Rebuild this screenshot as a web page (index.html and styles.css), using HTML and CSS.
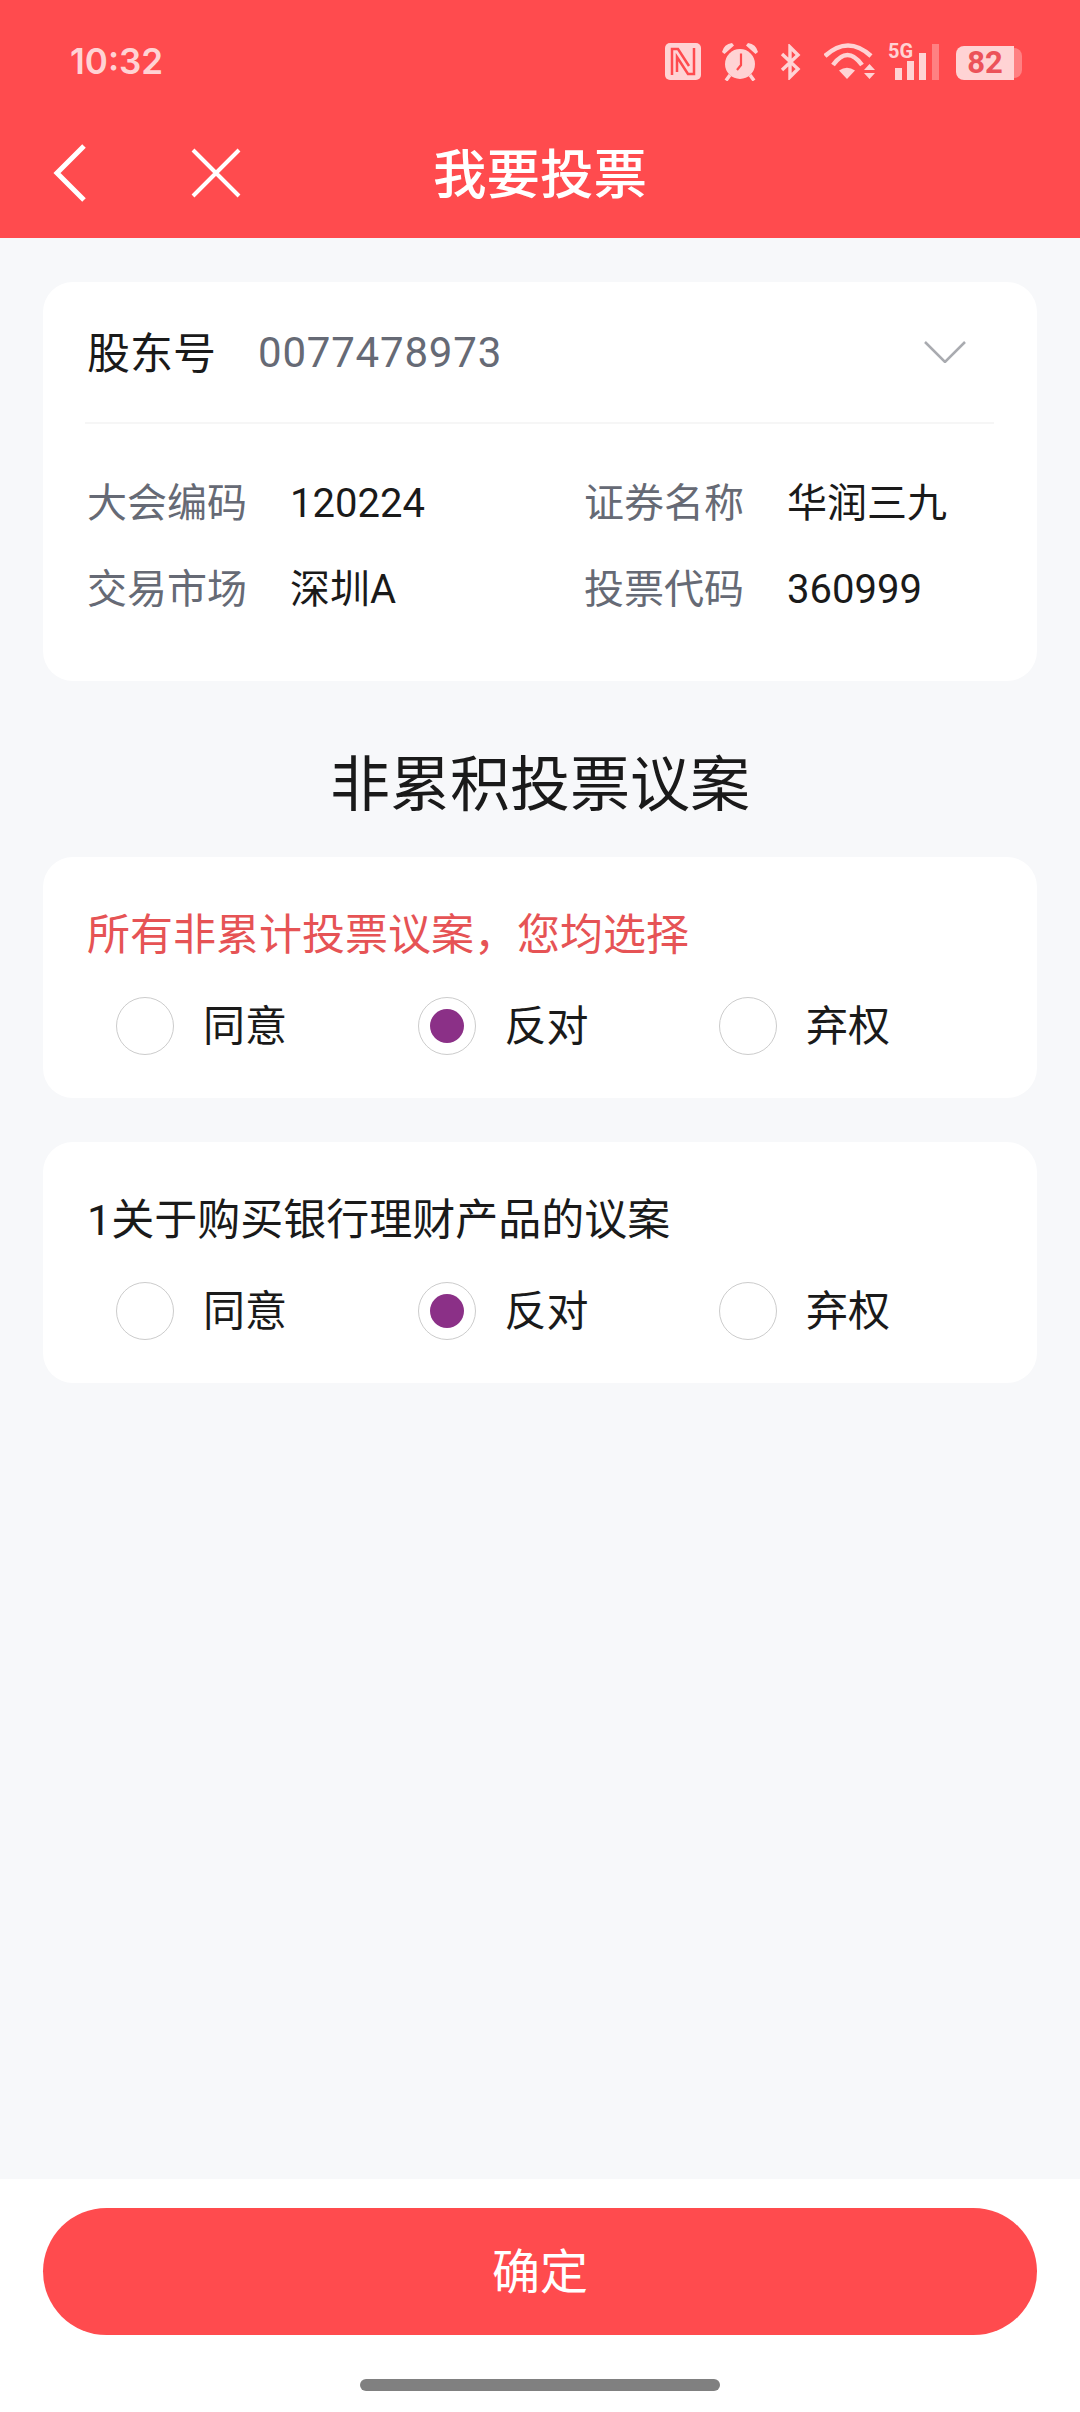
FILE: index.html
```html
<!DOCTYPE html>
<html lang="zh-CN">
  <head>
    <meta charset="UTF-8" />
    <meta name="viewport" content="width=device-width, initial-scale=1.0" />
    <title>我要投票</title>
    <link rel="stylesheet" href="styles.css">
  </head>
  <body>
    <header class="top">
      <div class="status-bar">
        <span class="time">10:32</span>
        <div class="status-icons">
          <svg class="ic-nfc" width="36" height="37" viewBox="0 0 36 37">
            <rect width="36" height="37" rx="5" fill="#ffd3d4"/>
            <path d="M7 32V6h6l11 17" fill="none" stroke="#ff4b4e" stroke-width="2.500"/>
            <path d="M29 5v26h-6L12 14v15" fill="none" stroke="#ff4b4e" stroke-width="2.500"/>
          </svg>
          <svg class="ic-alarm" width="36" height="38" viewBox="0 0 36 38">
            <circle cx="18" cy="21" r="15" fill="#ffd3d4"/>
            <path d="M0 9Q2 1 10 0l2 2.500L2.500 11zM36 9Q34 1 26 0l-2 2.500L33.500 11z" fill="#ffd3d4"/>
            <path d="M8 32 4 37.500M28 32l4 5.500" stroke="#ffd3d4" stroke-width="3.500"/>
            <path d="M19 10.500V22l-4 5" fill="none" stroke="#ff4b4e" stroke-width="2.200"/>
          </svg>
          <svg class="ic-bt" width="21" height="36" viewBox="0 0 21 36">
            <path d="M2 10 18 25 10 33V3l8 8L2 26" fill="none" stroke="#ffd3d4" stroke-width="3.400"/>
          </svg>
          <svg class="ic-wifi" width="52" height="37" viewBox="0 0 52 37">
            <path d="M1 13Q24-8 47 13" fill="none" stroke="#ffd3d4" stroke-width="4.500"/>
            <path d="M9 22Q23.500 2 38 22" fill="none" stroke="#ffd3d4" stroke-width="4.500"/>
            <path d="M15 27.500Q23 22 31 27.500L23 36z" fill="#ffd3d4"/>
            <path d="M40 27h11l-5.500-6zM40 30h11l-5.500 6z" fill="#ffd3d4"/>
          </svg>
          <div class="ic-signal">
            <span class="sig-5g">5G</span>
            <svg width="46" height="37" viewBox="0 0 46 37">
              <rect x="1" y="25" width="7" height="12" fill="#ffd3d4"/>
              <rect x="13" y="18" width="7" height="19" fill="#ffd3d4"/>
              <rect x="25" y="10" width="7" height="27" fill="#ffd3d4"/>
              <rect x="38" y="1" width="7" height="36" fill="#ff8082"/>
            </svg>
          </div>
          <div class="battery">
            <span class="battery-body">82</span>
            <span class="battery-nub"></span>
          </div>
        </div>
      </div>
      <nav class="nav">
        <div class="nav-icons">
          <svg width="36" height="60" viewBox="0 0 36 60">
            <path d="M32 3 5 30l27 27" fill="none" stroke="#fff" stroke-width="5"/>
          </svg>
          <svg width="50" height="50" viewBox="0 0 50 50">
            <path d="M2 2l46 46M48 2 2 48" fill="none" stroke="#fff" stroke-width="4"/>
          </svg>
        </div>
        <h1>我要投票</h1>
      </nav>
    </header>

    <main class="content">
      <section class="card info-card">
        <div class="holder-row">
          <span class="holder-label">股东号</span>
          <span class="holder-value">0077478973</span>
          <svg class="dropdown" width="42" height="22" viewBox="0 0 42 22">
            <path d="M1 1l20 20L41 1" fill="none" stroke="#a9abb0" stroke-width="2.500"/>
          </svg>
        </div>
        <div class="info-grid">
          <div class="info-item"><span class="info-label">大会编码</span><span class="info-value">120224</span></div>
          <div class="info-item"><span class="info-label">证券名称</span><span class="info-value">华润三九</span></div>
          <div class="info-item"><span class="info-label">交易市场</span><span class="info-value">深圳A</span></div>
          <div class="info-item"><span class="info-label">投票代码</span><span class="info-value">360999</span></div>
        </div>
      </section>

      <h2 class="section-title">非累积投票议案</h2>

      <section class="card vote-card">
        <p class="vote-title vote-title-all">所有非累计投票议案，您均选择</p>
        <div class="options">
          <div class="option"><span class="radio"></span>同意</div>
          <div class="option"><span class="radio checked"></span>反对</div>
          <div class="option"><span class="radio"></span>弃权</div>
        </div>
      </section>

      <section class="card vote-card">
        <p class="vote-title">1关于购买银行理财产品的议案</p>
        <div class="options">
          <div class="option"><span class="radio"></span>同意</div>
          <div class="option"><span class="radio checked"></span>反对</div>
          <div class="option"><span class="radio"></span>弃权</div>
        </div>
      </section>
    </main>

    <footer class="bottom">
      <button class="confirm" type="button">确定</button>
      <div class="home-bar"></div>
    </footer>
  </body>
</html>
```

FILE: styles.css
```css
* {
  box-sizing: border-box;
}
html,
body {
  margin: 0;
  height: 100%;
}
body {
  width: 1080px;
  height: 2412px;
  display: flex;
  flex-direction: column;
  background-color: #f7f8fa;
  color: #1a1a1a;
  font-family: Roboto, "Noto Sans CJK SC", sans-serif;
}

/* header */
.top {
  height: 238px;
  background-color: #ff4b4e;
  color: #fff;
}
.status-bar {
  height: 122px;
  padding: 43px 58px 0 70px;
  display: flex;
  justify-content: space-between;
  align-items: flex-start;
}
.time {
  font-family: Inter, sans-serif;
  font-size: 35px;
  line-height: 36px;
  font-weight: 600;
  color: #ffd3d4;
}
.status-icons {
  display: flex;
  align-items: flex-start;
}
.ic-alarm {
  margin-left: 21px;
}
.ic-bt {
  margin-left: 22px;
  margin-top: 1px;
}
.ic-wifi {
  margin-left: 23px;
}
.ic-signal {
  position: relative;
  margin-left: 4px;
  width: 60px;
  height: 37px;
  display: flex;
  justify-content: flex-end;
}
.sig-5g {
  position: absolute;
  left: 8px;
  top: 1px;
  font-size: 20px;
  line-height: 15px;
  font-weight: 700;
  color: #ffd3d4;
}
.battery {
  margin-left: 16px;
  margin-top: 3px;
  display: flex;
  align-items: center;
}
.battery-body {
  width: 58px;
  height: 34px;
  border-radius: 8px 0 0 8px;
  background-color: #ffd3d4;
  color: #ec5259;
  font-size: 31px;
  font-weight: 700;
  line-height: 34px;
  text-align: center;
}
.battery-nub {
  width: 8px;
  height: 30px;
  border-radius: 0 8px 8px 0;
  background-color: #ff8082;
}
.nav {
  position: relative;
  height: 116px;
  display: flex;
  align-items: center;
  justify-content: center;
}
.nav h1 {
  margin: 0 0 19px;
  font-size: 53.5px;
  font-weight: 500;
  font-family: "Noto Sans CJK SC", sans-serif;
}
.nav-icons {
  position: absolute;
  left: 52px;
  top: 21px;
  display: flex;
  align-items: center;
  gap: 103px;
}

/* content */
.content {
  flex: 1;
  padding: 44px 43px 0;
}
.card {
  background-color: #fff;
  border-radius: 30px;
}
.info-card {
  height: 399px;
  padding: 0 43px 0 44px;
}
.holder-row {
  height: 142px;
  margin-left: -2px;
  padding-left: 2px;
  display: flex;
  align-items: center;
  border-bottom: 2px solid #f6f6f6;
  font-size: 42px;
}
.holder-label {
  width: 171px;
  margin-bottom: 5px;
  font-size: 43px;
  font-family: "Noto Sans CJK SC", sans-serif;
}
.holder-value {
  color: #666a75;
  font-size: 42px;
  letter-spacing: 0.8px;
}
.dropdown {
  margin-left: auto;
  margin-right: 28px;
}
.info-grid {
  display: grid;
  grid-template-columns: 497px 1fr;
  row-gap: 30px;
  padding-top: 52px;
}
.info-item {
  display: flex;
  font-size: 40px;
  line-height: 56px;
}
.info-label {
  width: 203px;
  color: #666a75;
}
.section-title {
  margin: 0;
  height: 176px;
  padding-top: 20px;
  display: flex;
  align-items: center;
  justify-content: center;
  font-size: 60px;
  font-weight: 400;
  font-family: "Noto Sans CJK SC", sans-serif;
}
.vote-card {
  height: 241px;
  padding: 47px 44px 0;
  margin-bottom: 44px;
}
.vote-title {
  margin: 0;
  font-size: 43px;
  line-height: 62px;
}
.vote-title-all {
  color: #e65355;
}
.options {
  display: flex;
  margin-top: 31px;
  padding-left: 29px;
}
.option {
  flex: none;
  width: 301.5px;
  display: flex;
  align-items: center;
  gap: 29px;
  font-size: 42px;
  line-height: 57px;
}
.radio {
  width: 58px;
  height: 58px;
  border: 1.500px solid #cccccc;
  border-radius: 50%;
  display: flex;
  align-items: center;
  justify-content: center;
}
.radio.checked::after {
  content: "";
  width: 34px;
  height: 34px;
  border-radius: 50%;
  background-color: #8b3087;
}

/* bottom */
.bottom {
  height: 233px;
  background-color: #fff;
  padding: 29px 43px 0;
}
.confirm {
  display: block;
  width: 100%;
  height: 127px;
  padding-bottom: 8px;
  border: none;
  border-radius: 64px;
  background-color: #ff4b4e;
  color: #fff;
  font-family: "Noto Sans CJK SC", sans-serif;
  font-size: 48px;
}
.home-bar {
  width: 360px;
  height: 12px;
  margin: 44px auto 0;
  border-radius: 6px;
  background-color: #808080;
}
```
